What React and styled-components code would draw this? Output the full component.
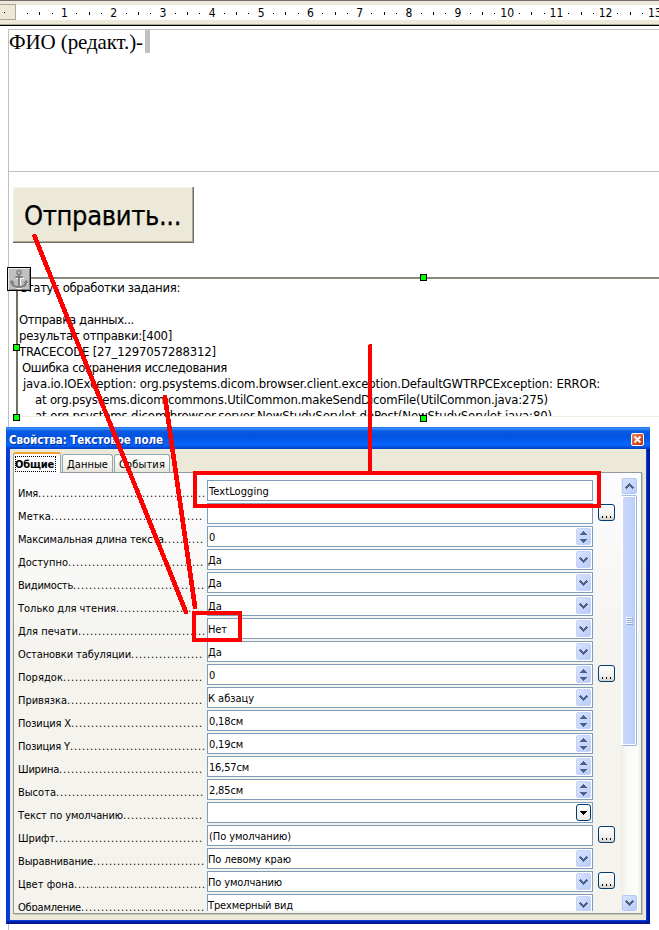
import React, { useLayoutEffect, useRef } from 'react';
import styled, { createGlobalStyle, css } from 'styled-components';

const Global = createGlobalStyle`
  * { box-sizing: border-box; }
  body { margin: 0; background: #fff; overflow: hidden; }
`;

const UI = `'DejaVu Sans Condensed', 'DejaVu Sans', sans-serif`;

const Screen = styled.div`
  position: relative;
  width: 659px;
  height: 930px;
  overflow: hidden;
  display: flex;
  flex-direction: column;
  background: #fff;
  color: #000;
  font-family: ${UI};
  font-stretch: condensed;
  font-size: 11px;
`;

const TextSpan = styled.span`
  display: inline-block;
  white-space: pre;
`;

/* Text tracked so that it takes up the given width. */
function Fit({ w, children }) {
  const ref = useRef(null);
  useLayoutEffect(() => {
    const el = ref.current;
    el.style.letterSpacing = '0px';
    const natural = el.getBoundingClientRect().width;
    el.style.letterSpacing = `${(w - natural) / children.length}px`;
  }, [w, children]);
  return <TextSpan ref={ref}>{children}</TextSpan>;
}

/* ---------- Ruler ---------- */
const Ruler = styled.div`
  flex: none;
  height: 26px;
  display: flex;
  border-top: 1px solid #716f64;
  border-bottom: 1px solid #000;
  background: #ece9d8;
  box-shadow: inset 0 -1px #aca899, inset 0 3px #efe6dc;
`;
const RulerMargin = styled.div`
  width: 16px;
  height: 16px;
  margin-top: 3px;
  border: 1px solid #aca899;
  border-left: 0;
  display: flex;
  align-items: center;
  padding-left: 4px;
`;
const RulerScale = styled.div`
  flex: 1;
  min-width: 0;
  height: 15px;
  margin-top: 4px;
  padding-left: 5.5px;
  background: #fff;
  display: flex;
  overflow: hidden;
`;
const Unit = styled.div`
  flex: none;
  width: 49.2px;
  display: grid;
  grid-template-columns: repeat(4, 12.3px);
`;
const Cell = styled.div`
  display: flex;
  align-items: center;
  justify-content: center;
  font-size: 12px;
  line-height: 15px;
  & > span { margin-top: 1px; }
`;
const Mark = styled.i`
  flex: none;
  width: 1px;
  height: ${(p) => (p.$half ? 3 : 1)}px;
  background: #000;
`;

/* ---------- Document ---------- */
const Sheet = styled.div`
  flex: 1;
  margin: 3px 0 0 8px;
  border: 1px solid #c0c0c0;
  border-width: 1px 0 0 1px;
  display: flex;
  flex-direction: column;
`;
const Header = styled.div`
  height: 142px;
  border-bottom: 1px solid #c0c0c0;
  display: flex;
  align-items: flex-start;
  font: 21px/24px 'Liberation Serif', serif;
`;
const FieldShade = styled.i`
  width: 5px;
  height: 23px;
  margin-left: 2px;
  background: #c0c0c0;
`;
const SendButton = styled.button`
  width: 181px;
  height: 56px;
  margin: 15px 0 0 4px;
  padding: 1px 0 0 11px;
  text-align: left;
  border: 0;
  background: #ece9d8;
  box-shadow: inset -1px -1px #716f64, inset -2px -2px #aca899, inset 1px 1px #f6f4ec;
  font: 27px/56px ${UI};
  font-stretch: condensed;
  color: #000;
  -webkit-text-stroke: 0.25px #000;
`;
const LogBox = styled.div`
  position: relative;
  height: 140px;
  margin: 34px 0 0 7px;
  border: 2px solid #716f64;
  border-width: 2px 0 1px 2px;
  border-top-color: #8b887b;
  border-bottom-color: #f1efe2;
`;
const LogText = styled.div`
  height: 137px;
  overflow: hidden;
  font-size: 13px;
  line-height: 16px;
  padding: 1px 0 0 1px;
`;
const LogLine = styled.div`
  height: 16px;
  padding-left: ${(p) => p.$indent}px;
  white-space: nowrap;
`;
const Handle = styled.i`
  position: absolute;
  left: ${(p) => p.$x}px;
  top: ${(p) => p.$y}px;
  width: 7px;
  height: 7px;
  border: 1px solid #000;
  background: #0f0;
`;
const Anchor = styled.div`
  position: absolute;
  left: -11px;
  top: -12px;
  width: 24px;
  height: 24px;
  border: 1px solid #000;
  background: #c0c0c0;
  box-shadow: inset 1px 1px #e8e8e8, inset -1px -1px #808080;
`;

/* ---------- Dialog ---------- */
const Dialog = styled.section`
  position: absolute;
  left: 6px;
  top: 427px;
  width: 644px;
  height: 497px;
  display: flex;
  flex-direction: column;
  padding: 0 4px 4px;
  background: #0a3fe0;
  box-shadow: inset 1px 0 #0831d9, inset -1px -1px #00138c, inset -3px -3px #001ea0, inset 3px 0 #0838d8;
`;
const TitleBar = styled.header`
  flex: none;
  height: 22px;
  margin: 0 -4px;
  padding: 0 6px 0 3px;
  display: flex;
  align-items: center;
  justify-content: space-between;
  color: #fff;
  font-weight: bold;
  font-size: 11px;
  background: linear-gradient(#0a5bd8 0, #3f93ff 1px, #2f86fb 2px, #0a5ae4 4px, #0253e0 9px, #0560f4 15px, #0667fc 18px, #0550e0 20px, #0240c0 22px);
`;
const Title = styled.h1`
  margin: 4px 0 0;
  font-size: 11.5px;
  line-height: 16px;
  text-shadow: 1px 1px #0a2a9a;
`;
const CloseButton = styled.button`
  width: 13px;
  height: 13px;
  margin-top: 2px;
  padding: 0;
  border: 1px solid #fff;
  border-radius: 2px;
  background: linear-gradient(135deg, #ee8a68, #dd4a22 55%, #b83410);
  display: grid;
  place-items: center;
`;
const Body = styled.div`
  flex: 1;
  min-height: 0;
  padding: 3px 4px 6px 3px;
  display: flex;
  flex-direction: column;
  background: #ece9d8;
`;
const Tabs = styled.nav`
  flex: none;
  height: 20px;
  display: flex;
  align-items: flex-end;
  gap: 1px;
`;
const Tab = styled.button`
  width: ${(p) => p.$w}px;
  height: 18px;
  padding: 2px 0 0 4px;
  text-align: left;
  border: 1px solid #91a7b4;
  border-bottom: 0;
  border-radius: 3px 3px 0 0;
  background: linear-gradient(#fff, #f4f3ee 60%, #e6e5da);
  font: 11px/15px ${UI};
  font-stretch: condensed;
  white-space: nowrap;
  color: #000;
  ${(p) =>
    p.$active &&
    css`
      position: relative;
      height: 21px;
      padding: 1px 0 0 1px;
      margin-bottom: -1px;
      border-top: 2px solid #f0a030;
      border-bottom: 0;
      background: #fcfcfe;
      font-weight: bold;
    `}
`;
const Focus = styled.span`
  display: block;
  width: 41px;
  height: 16px;
  line-height: 17px;
  outline: 1px dotted #000;
  outline-offset: -1px;
`;
const Panel = styled.div`
  flex: 1;
  min-height: 0;
  border: 1px solid #919b9c;
  box-shadow: 1px 1px #c8c6b8;
  padding: 5px 3px 2px 4px;
  display: flex;
  background: linear-gradient(#fcfcfe, #f4f3ee 45%, #f4f3ee);
`;
const Rows = styled.div`
  flex: 1;
  min-width: 0;
  margin-top: 2px;
  overflow: hidden;
`;
const Row = styled.div`
  height: 23px;
  display: grid;
  grid-template-columns: 189px 386px 17px;
  column-gap: 0;
`;
const Label = styled.label`
  height: 23px;
  overflow: hidden;
  padding-top: 6px;
  line-height: 15px;
  white-space: nowrap;
`;
const Field = styled.div`
  height: 21px;
  border: 1px solid #7f9db9;
  background: #fff;
  padding: 0 1px 0 ${(p) => (p.$combo ? 0 : 1)}px;
  display: flex;
  justify-content: space-between;
  align-items: center;
  line-height: 15px;
  & > span { margin-top: 1px; }
`;
const FieldButton = styled.button`
  width: 15px;
  height: 17px;
  margin-left: auto;
  padding: 0;
  border: 1px solid #c3d3fd;
  border-radius: 2px;
  background: linear-gradient(135deg, #d8e3fe, #b9cbf8);
  display: grid;
  place-items: center;
  ${(p) =>
    p.$dark &&
    css`
      border-color: #003c74;
      background: linear-gradient(#fff, #ecebe6);
      border-radius: 3px;
    `}
`;
const MoreButton = styled.button`
  width: 17px;
  height: 17px;
  margin: 1px 0 0 5px;
  padding: 0 0 2px;
  border: 1px solid #003c74;
  border-radius: 3px;
  background: linear-gradient(#fff, #f0efea 70%, #d6d0c5);
  display: flex;
  align-items: flex-end;
  justify-content: center;
  gap: 3px;
`;
const Dot = styled.i`
  width: 1px;
  height: 2px;
  background: #000;
`;
const ScrollBar = styled.div`
  width: 17px;
  display: flex;
  flex-direction: column;
  background: linear-gradient(90deg, #eeede5, #f8f8f4 30%, #fefefb);
`;
const ScrollButton = styled.button`
  flex: none;
  width: 15px;
  height: 16px;
  margin-left: 1px;
  padding: 0;
  border: 1px solid #b4c8f6;
  border-radius: 2px;
  background: linear-gradient(135deg, #d8e3fe, #b9cbf8);
  display: grid;
  place-items: center;
`;
const Thumb = styled.div`
  flex: none;
  width: 16px;
  height: 251px;
  margin: 1px 0 auto;
  border: 1px solid #98b0e8;
  border-left-color: #fff;
  border-top-color: #a8bcec;
  border-radius: 2px;
  box-shadow: inset -1px -1px #fff, inset 1px 1px #fff;
  background: linear-gradient(90deg, #c9d8fc, #c4d3fc 60%, #b9cbf6);
  display: flex;
  flex-direction: column;
  align-items: center;
  justify-content: center;
  gap: 1px;
`;
const Grip = styled.i`
  width: 6px;
  height: 1px;
  background: #f4f8ff;
  box-shadow: 1px 1px #8ca6dd;
`;

/* ---------- Red annotation strokes ---------- */
const Marks = styled.svg`
  position: absolute;
  left: 0;
  top: 0;
  pointer-events: none;
`;

const Chevron = ({ up }) => (
  <svg width="9" height="6" viewBox="0 0 9 6" shapeRendering="crispEdges">
    <path
      d={up ? 'M0 4h1V3h1V2h1V1h1V0h1v1h1v1h1v1h1v1h1v1H8v1H7V5H6V4H5V3H4v1H3v1H2v1H1V5H0z' : 'M0 1h1V0h1v1h1v1h1v1h1V2h1V1h1V0h1v1h1v1H8v1H7v1H6v1H5v1H4V5H3V4H2V3H1V2H0z'}
      fill="#4d6185"
    />
  </svg>
);
const Spin = () => (
  <svg width="7" height="12" viewBox="0 0 7 12" shapeRendering="crispEdges">
    <path d="M3 0h1v1h1v1h1v1h1v1H0V3h1V2h1V1h1zM0 8h7v1H6v1H5v1H4v1H3v-1H2v-1H1V9H0z" fill="#4d6185" />
  </svg>
);
const Triangle = () => (
  <svg width="7" height="4" viewBox="0 0 7 4" shapeRendering="crispEdges">
    <path d="M0 0h7v1H6v1H5v1H4v1H3V3H2V2H1V1H0z" fill="#000" />
  </svg>
);
const AnchorIcon = () => (
  <svg width="22" height="22" viewBox="0 0 22 22" fill="none" stroke="#808080">
    <path d="M12.500 8v10M8 10.500h8M3 15l3 4 5 2 5-2 4-4" stroke="#fff" strokeWidth="1" />
    <circle cx="11" cy="4.500" r="2" strokeWidth="1.500" />
    <path d="M11 7v12M7.500 9h7" strokeWidth="2" />
    <path d="M3.500 14c.5 3.500 3.500 5 7.500 5s7-1.500 7.500-5" strokeWidth="2" />
    <path d="M2 15l1.500-3 3 3zM15.500 15l3-3 1.500 3z" fill="#808080" strokeWidth=".5" />
  </svg>
);

// text, width, indent
const LOG = [
  ['Статус обработки задания:', 161, 0],
  ['', 0, 0],
  ['Отправка данных...', 115, 0],
  ['результат отправки:[400]', 153, 0],
  ['TRACECODE [27_1297057288312]', 197, 0],
  ['Ошибка сохранения исследования', 205, 3],
  ['java.io.IOException: org.psystems.dicom.browser.client.exception.DefaultGWTRPCException: ERROR:', 577, 4],
  ['at org.psystems.dicom.commons.UtilCommon.makeSendDicomFile(UtilCommon.java:275)', 513, 16],
  ['at org.psystems.dicom.browser.server.NewStudyServlet.doPost(NewStudyServlet.java:80)', 517, 16],
];

// label, label width, dots end x, value, value width, control, has "more" button
const ROWS = [
  ['Имя', 20, 204, 'TextLogging', 60, 'edit'],
  ['Метка', 33, 202, '', 0, 'edit', true],
  ['Максимальная длина текста', 146, 203, '0', 7, 'spin'],
  ['Доступно', 50, 203, 'Да', 14, 'combo'],
  ['Видимость', 55, 204, 'Да', 14, 'combo'],
  ['Только для чтения', 98, 203, 'Да', 14, 'combo'],
  ['Для печати', 60, 205, 'Нет', 19, 'combo'],
  ['Остановки табуляции', 113, 203, 'Да', 14, 'combo'],
  ['Порядок', 45, 202, '0', 7, 'spin', true],
  ['Привязка', 49, 202, 'К абзацу', 46, 'combo'],
  ['Позиция X', 53, 204, '0,18см', 34, 'spin'],
  ['Позиция Y', 52, 204, '0,19см', 34, 'spin'],
  ['Ширина', 41, 202, '16,57см', 40, 'spin'],
  ['Высота', 38, 203, '2,85см', 34, 'spin'],
  ['Текст по умолчанию', 105, 202, '', 0, 'drop'],
  ['Шрифт', 37, 202, '(По умолчанию)', 82, 'edit', true],
  ['Выравнивание', 75, 204, 'По левому краю', 83, 'combo'],
  ['Цвет фона', 56, 205, 'По умолчанию', 74, 'combo', true],
  ['Обрамление', 63, 204, 'Трехмерный вид', 85, 'combo'],
];

function PropertyRow({ row }) {
  const [label, lw, end, value, vw, kind, more] = row;
  const dots = Math.round((end - 18 - lw) / 4);
  return (
    <Row>
      <Label>
        <Fit w={lw}>{label}</Fit>
        <Fit w={dots * 4}>{'.'.repeat(dots)}</Fit>
      </Label>
      <Field $combo={kind === 'combo'}>
        {value && <Fit w={vw}>{value}</Fit>}
        {kind === 'combo' && <FieldButton><Chevron /></FieldButton>}
        {kind === 'spin' && <FieldButton><Spin /></FieldButton>}
        {kind === 'drop' && <FieldButton $dark><Triangle /></FieldButton>}
      </Field>
      {more && <MoreButton><Dot /><Dot /><Dot /></MoreButton>}
    </Row>
  );
}

export default function App() {
  return (
    <Screen>
      <Global />
      <Ruler>
        <RulerMargin><Mark /></RulerMargin>
        <RulerScale>
          {Array.from({ length: 13 }, (_, i) => (
            <Unit key={i}>
              <Cell><Mark /></Cell>
              <Cell><Mark $half /></Cell>
              <Cell><Mark /></Cell>
              <Cell><span>{i + 1}</span></Cell>
            </Unit>
          ))}
        </RulerScale>
      </Ruler>

      <Sheet>
        <Header>
          <Fit w={134}>ФИО (редакт.)-</Fit>
          <FieldShade />
        </Header>
        <SendButton><Fit w={157}>Отправить...</Fit></SendButton>
        <LogBox>
          <LogText>
            {LOG.map(([text, w, indent], i) => (
              <LogLine key={i} $indent={indent}>{text && <Fit w={w}>{text}</Fit>}</LogLine>
            ))}
          </LogText>
          <Handle $x={402} $y={-5} />
          <Handle $x={-5} $y={65} />
          <Handle $x={-5} $y={135} />
          <Handle $x={402} $y={136} />
          <Anchor><AnchorIcon /></Anchor>
        </LogBox>
      </Sheet>

      <Dialog>
        <TitleBar>
          <Title><Fit w={154}>Свойства: Текстовое поле</Fit></Title>
          <CloseButton>
            <svg width="9" height="9" viewBox="0 0 9 9"><path d="M1.500 1.500l6 6M7.500 1.500l-6 6" stroke="#fff" strokeWidth="1.900" /></svg>
          </CloseButton>
        </TitleBar>
        <Body>
          <Tabs>
            <Tab $w={48} $active><Focus><Fit w={39}>Общие</Fit></Focus></Tab>
            <Tab $w={51}><Fit w={41}>Данные</Fit></Tab>
            <Tab $w={56}><Fit w={46}>События</Fit></Tab>
          </Tabs>
          <Panel>
            <Rows>
              {ROWS.map((row) => <PropertyRow key={row[0]} row={row} />)}
            </Rows>
            <ScrollBar>
              <ScrollButton><Chevron up /></ScrollButton>
              <Thumb><Grip /><Grip /><Grip /><Grip /></Thumb>
              <ScrollButton><Chevron /></ScrollButton>
            </ScrollBar>
          </Panel>
        </Body>
      </Dialog>

      <Marks width="659" height="930" fill="none" stroke="#f00" strokeWidth="4" strokeLinecap="round" shapeRendering="crispEdges">
        <path d="M34.500 236L186 612M165 397L195 607" strokeWidth="4.600" />
        <path d="M370 346V472" />
        <rect x="195" y="473" width="404" height="33" />
        <rect x="194" y="613" width="46" height="27" />
      </Marks>
    </Screen>
  );
}
